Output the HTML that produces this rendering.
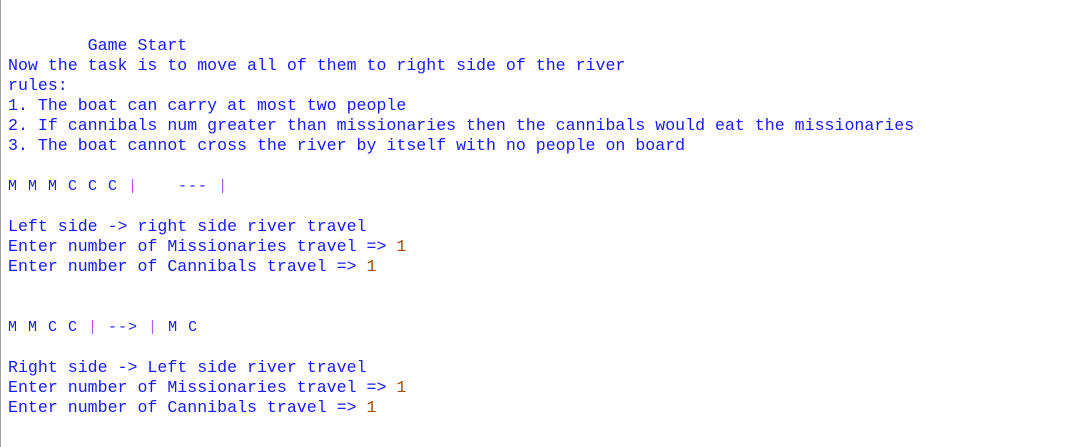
<!DOCTYPE html>
<html><head><style>
html,body{margin:0;padding:0;background:#fff;width:1078px;height:447px;overflow:hidden}
.b{position:absolute;left:0;top:0;width:1px;height:447px;background:#a0a0a0}
pre{position:absolute;left:8px;top:36px;margin:0;font-family:"Liberation Mono",monospace;font-size:16.6px;line-height:20px;color:#1a1aff}
.s{font-size:15px;letter-spacing:1px}
.p{color:#b060e0}
.o{color:#a05000}
</style></head><body><div class="b"></div>
<pre>        Game Start
Now the task is to move all of them to right side of the river
rules:
1. The boat can carry at most two people
2. If cannibals num greater than missionaries then the cannibals would eat the missionaries
3. The boat cannot cross the river by itself with no people on board

<span class="s">M M M C C C <span class="p">|</span>    --- <span class="p">|</span></span>

Left side -&gt; right side river travel
Enter number of Missionaries travel =&gt; <span class="o">1</span>
Enter number of Cannibals travel =&gt; <span class="o">1</span>


<span class="s">M M C C <span class="p">|</span> --&gt; <span class="p">|</span> M C</span>

Right side -&gt; Left side river travel
Enter number of Missionaries travel =&gt; <span class="o">1</span>
Enter number of Cannibals travel =&gt; <span class="o">1</span></pre>
</body></html>
